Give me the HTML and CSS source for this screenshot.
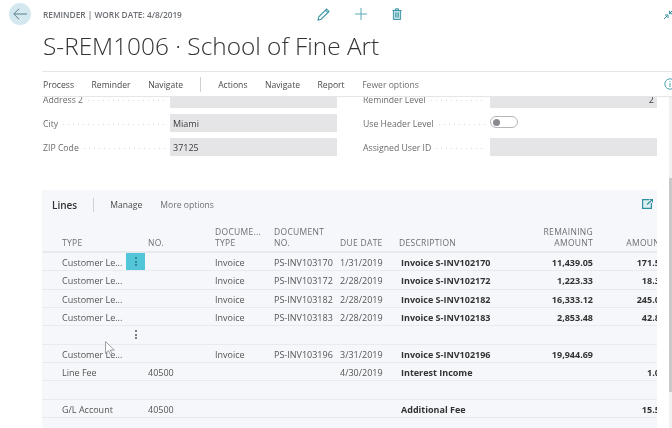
FILE: index.html
```html
<!DOCTYPE html>
<html lang="en">
<head>
<meta charset="utf-8">
<title>S-REM1006 · School of Fine Art</title>
<link rel="stylesheet" href="styles.css">
</head>
<body>
<div class="page">
  <header class="head">
    <button class="back" aria-label="Back">
      <svg width="14" height="12" viewBox="0 0 14 12"><path d="M6 .8 .8 6l5.2 5.2M.8 6H14" fill="none" stroke="#5a7f8c" stroke-width="1"/></svg>
    </button>
    <div class="head-main">
      <div class="head-top">
        <span class="caption">REMINDER | WORK DATE: 4/8/2019</span>
        <div class="head-icons">
          <svg width="13" height="13" viewBox="0 0 13 13"><path d="M1 12l.8-3.2L9.6 1l2.4 2.4-7.8 7.8zM8.4 2.2l2.4 2.4" fill="none" stroke="#3f97a6" stroke-width="1.1"/></svg>
          <svg width="12" height="12" viewBox="0 0 12 12"><path d="M6 0v12M0 6h12" fill="none" stroke="#5aa9b5" stroke-width="1"/></svg>
          <svg width="10" height="12" viewBox="0 0 10 12"><path d="M.5 2.5h9M3.5 2.5V.8h3v1.7M1.4 2.5v9h7.2v-9z" fill="#bfe0e4" stroke="#3f97a6" stroke-width="1"/><path d="M3.6 4.5v5M5 4.5v5M6.4 4.5v5" fill="none" stroke="#3f97a6" stroke-width=".8"/></svg>
        </div>
      </div>
      <h1 class="title">S-REM1006 · School of Fine Art</h1>
    </div>
    <svg class="collapse" width="9" height="9" viewBox="0 0 9 9"><path d="M0 9l3.6-3.6M1 5h3v3M9 0 5.6 3.4M5.4.8v3h3" fill="none" stroke="#2f8fa0" stroke-width="1"/></svg>
  </header>
  <nav class="actions">
    <span>Process</span><span>Reminder</span><span>Navigate</span>
    <i class="sep"></i>
    <span>Actions</span><span>Navigate</span><span>Report</span><span class="muted">Fewer options</span>
    <svg class="info" width="12" height="12" viewBox="0 0 12 12"><circle cx="6" cy="6" r="5.2" fill="none" stroke="#4fa3b0"/><path d="M6 5v4M6 3v1" stroke="#4fa3b0"/></svg>
  </nav>
  <div class="scroller">
    <section class="form">
      <div class="field clipped"><span class="label">Address 2</span><span class="dots"></span><span class="value"></span></div>
      <div class="field clipped"><span class="label">Reminder Level</span><span class="dots"></span><span class="value num">2</span></div>
      <div class="field"><span class="label">City</span><span class="dots"></span><span class="value">Miami</span></div>
      <div class="field"><span class="label">Use Header Level</span><span class="dots"></span><span class="toggle"><i></i></span></div>
      <div class="field"><span class="label">ZIP Code</span><span class="dots"></span><span class="value">37125</span></div>
      <div class="field"><span class="label">Assigned User ID</span><span class="dots"></span><span class="value"></span></div>
    </section>
    <section class="lines">
      <div class="lines-bar">
        <strong>Lines</strong><i class="sep"></i><span>Manage</span><span class="muted">More options</span>
        <svg class="expand" width="11" height="10" viewBox="0 0 11 10"><path d="M7 .6H.6v8.8h8.8V4" fill="#dff0f3" stroke="#2f8fa0" stroke-width="1.2"/><path d="M5 5.5 10.5.5M7.5.5h3v3" fill="none" stroke="#2f8fa0" stroke-width="1.2"/></svg>
      </div>
      <div class="row head-row">
        <span>TYPE</span><span>NO.</span><span>DOCUME...<br>TYPE</span><span>DOCUMENT<br>NO.</span><span>DUE DATE</span><span>DESCRIPTION</span><span class="r">REMAINING<br>AMOUNT</span><span class="r">AMOUNT</span>
      </div>
      <div class="row"><span>Customer Le...</span><span></span><span>Invoice</span><span>PS-INV103170</span><span>1/31/2019</span><b>Invoice S-INV102170</b><b class="r">11,439.05</b><b class="r">171.59</b><em class="kebab active"><i></i><i></i><i></i></em></div>
      <div class="row"><span>Customer Le...</span><span></span><span>Invoice</span><span>PS-INV103172</span><span>2/28/2019</span><b>Invoice S-INV102172</b><b class="r">1,223.33</b><b class="r">18.35</b></div>
      <div class="row"><span>Customer Le...</span><span></span><span>Invoice</span><span>PS-INV103182</span><span>2/28/2019</span><b>Invoice S-INV102182</b><b class="r">16,333.12</b><b class="r">245.00</b></div>
      <div class="row"><span>Customer Le...</span><span></span><span>Invoice</span><span>PS-INV103183</span><span>2/28/2019</span><b>Invoice S-INV102183</b><b class="r">2,853.48</b><b class="r">42.80</b></div>
      <div class="row"><em class="kebab"><i></i><i></i><i></i></em></div>
      <div class="row"><span>Customer Le...</span><span></span><span>Invoice</span><span>PS-INV103196</span><span>3/31/2019</span><b>Invoice S-INV102196</b><b class="r">19,944.69</b><b class="r"></b></div>
      <div class="row"><span>Line Fee</span><span>40500</span><span></span><span></span><span>4/30/2019</span><b>Interest Income</b><b class="r"></b><b class="r">1.00</b></div>
      <div class="row"></div>
      <div class="row"><span>G/L Account</span><span>40500</span><span></span><span></span><span></span><b>Additional Fee</b><b class="r"></b><b class="r">15.50</b></div>
    </section>
    <div class="track"><i class="thumb"></i></div>
  </div>
  <svg class="cursor" width="10" height="15" viewBox="0 0 10 15"><path d="M.5.5v12l3-2.6 2 4 1.8-.9-2-3.9h4z" fill="#fff" fill-opacity=".7" stroke="#8a8a90" stroke-width=".8"/></svg>
</div>
</body>
</html>
```
FILE: styles.css
```css
* { box-sizing: border-box; }
html, body { margin: 0; height: 100%; }
body { background: #fff; font-family: "Open Sans", "Liberation Sans", sans-serif; color: #4a4a4a; overflow: hidden; }
.page { position: relative; width: 672px; height: 428px; overflow: hidden; filter: blur(.3px); }

.head { position: relative; height: 71px; padding: 3px 0 0 9px; display: flex; gap: 12px; }
.back { width: 22px; height: 22px; border: 0; padding: 0; border-radius: 50%; background: #d3e9ef; display: flex; align-items: center; justify-content: center; flex: none; }
.head-main { width: 600px; }
.head-top { display: flex; align-items: center; height: 22px; }
.caption { font-size: 8.3px; font-weight: 600; color: #6a6e73; width: 274px; white-space: nowrap; }
.head-icons { display: flex; align-items: center; gap: 25px; }
.title { margin: 3px 0 0; font-size: 24.4px; line-height: 36px; font-weight: 300; color: #333; white-space: nowrap; }
.collapse { position: absolute; left: 664px; top: 10px; }

.actions { height: 26px; margin-left: 42px; border-top: 1px solid #e6e6e6; border-bottom: 1px solid #e6e6e6; display: flex; align-items: center; gap: 17.5px; font-size: 8.6px; color: #4a4a4a; white-space: nowrap; position: relative; padding: 1px 0 0 1px; }
.actions .sep { width: 1px; height: 15px; background: #d0d0d0; margin: -1px 0 0 -1px; }
.muted { color: #6f6f73; }
.info { position: absolute; left: 622px; top: 6px; }

.scroller { position: relative; height: 331px; overflow: hidden; }
.form { margin: -7px 15px 0 43px; display: grid; grid-template-columns: 294px 294px; column-gap: 26px; row-gap: 6px; }
.field { display: flex; align-items: center; height: 18px; font-size: 9px; color: #6b6b6f; }
.label { white-space: nowrap; padding: 2px 5px 0 0; font-size: 8.7px; }
.dots { flex: 1; height: 1px; margin: 3px 5px 0 0; background: repeating-linear-gradient(90deg, #d6d6d8 0 1px, transparent 1px 5px); }
.value { width: 167px; flex: none; height: 18px; background: #e5e5e8; color: #3c3c3c; font-size: 9px; line-height: 20px; padding: 0 3px; }
.value.num { text-align: right; }
.toggle { width: 28px; height: 12px; flex: none; margin: -2px 139px 0 0; border: 1px solid #b5b5b8; border-radius: 6px; background: #fff; padding: 1.5px 2px; position: relative; }
.toggle i { display: block; width: 7px; height: 7px; border-radius: 50%; background: #8a8a92; }

.lines { margin: 34px 15px 0 42px; background: #f6f7fb; height: 260px; overflow: hidden; position: relative; }
.lines-bar { height: 28px; display: flex; align-items: center; padding: 1px 0 0 10px; font-size: 8.6px; position: relative; white-space: nowrap; }
.lines-bar strong { font-size: 10px; font-weight: 600; color: #333; }
.lines-bar .sep { width: 1px; height: 14px; background: #cfcfd4; margin: 0 16px 0 16px; }
.lines-bar .muted { margin-left: 18px; }
.expand { position: absolute; left: 600px; top: 9px; }

.row { position: relative; display: grid; grid-template-columns: 86px 67px 59px 66px 59px 120px 74px 72px; width: 650px; padding: 1px 0 0 20px; height: 18.35px; line-height: 17px; font-size: 9px; color: #555; border-bottom: 1.5px solid #e9eaee; white-space: nowrap; align-items: center; }
.row b { font-weight: 700; color: #333; padding-left: 2px; }
.row .r { text-align: right; }
.head-row { height: 35px; align-items: end; line-height: 11px; font-size: 8.5px; color: #6a6e73; padding: 0 0 3px 20px; letter-spacing: .3px; border-bottom-width: 2px; }

.kebab { position: absolute; left: 84px; top: 0; width: 19px; height: 17px; display: flex; flex-direction: column; align-items: center; justify-content: center; gap: 1.5px; }
.kebab i { width: 2px; height: 2px; background: #555; border-radius: 50%; }
.kebab.active { background: #52c5d8; }
.kebab.active i { background: #24707e; }

.track { position: absolute; right: 0; top: 0; width: 3.5px; height: 100%; background: #f1f1f1; }
.thumb { display: block; margin-top: 81px; height: 214px; background: #c9c9c9; }
.cursor { position: absolute; left: 105px; top: 341px; }
```
